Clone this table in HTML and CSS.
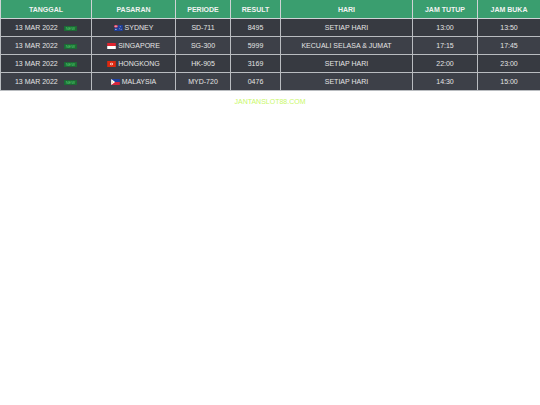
FILE: index.html
```html
<!DOCTYPE html>
<html>
<head>
<meta charset="utf-8">
<link rel="stylesheet" href="styles.css">
</head>
<body>
<table class="tbl">
  <colgroup>
    <col class="c1"><col class="c2"><col class="c3"><col class="c4"><col class="c5"><col class="c6"><col class="c7">
  </colgroup>
  <thead>
    <tr><th>TANGGAL</th><th>PASARAN</th><th>PERIODE</th><th>RESULT</th><th>HARI</th><th>JAM TUTUP</th><th>JAM BUKA</th></tr>
  </thead>
  <tbody>
    <tr>
      <td>13 MAR 2022 <span class="new">NEW</span></td>
      <td><svg class="flag" viewBox="0 0 10 7"><rect width="10" height="7" fill="#1f3f9a"/><rect width="4" height="3" fill="#c8102e"/><path d="M0 1.5h4M2 0v3" stroke="#fff" stroke-width="0.6"/><circle cx="7" cy="2" r="0.5" fill="#fff"/><circle cx="6" cy="4.5" r="0.5" fill="#fff"/><circle cx="8" cy="5" r="0.5" fill="#fff"/><circle cx="2" cy="5" r="0.7" fill="#fff"/></svg>SYDNEY</td>
      <td>SD-711</td><td>8495</td><td>SETIAP HARI</td><td>13:00</td><td>13:50</td>
    </tr>
    <tr>
      <td>13 MAR 2022 <span class="new">NEW</span></td>
      <td><svg class="flag" viewBox="0 0 10 7"><rect width="10" height="3.5" fill="#e0242f"/><rect y="3.5" width="10" height="3.5" fill="#fff"/></svg>SINGAPORE</td>
      <td>SG-300</td><td>5999</td><td>KECUALI SELASA &amp; JUMAT</td><td>17:15</td><td>17:45</td>
    </tr>
    <tr>
      <td>13 MAR 2022 <span class="new">NEW</span></td>
      <td><svg class="flag" viewBox="0 0 10 7"><rect width="10" height="7" fill="#de2910"/><circle cx="5" cy="3.5" r="1.6" fill="#fff"/><circle cx="5" cy="3.5" r="0.8" fill="#de2910"/></svg>HONGKONG</td>
      <td>HK-905</td><td>3169</td><td>SETIAP HARI</td><td>22:00</td><td>23:00</td>
    </tr>
    <tr>
      <td>13 MAR 2022 <span class="new">NEW</span></td>
      <td><svg class="flag" viewBox="0 0 10 7"><rect width="10" height="3.5" fill="#1e3fa0"/><rect y="3.5" width="10" height="3.5" fill="#d7263d"/><path d="M0 0L4.5 3.5L0 7Z" fill="#fff"/><circle cx="1.5" cy="3.5" r="0.6" fill="#f7c21b"/></svg>MALAYSIA</td>
      <td>MYD-720</td><td>0476</td><td>SETIAP HARI</td><td>14:30</td><td>15:00</td>
    </tr>
  </tbody>
</table>
<div class="footer">JANTANSLOT88.COM</div>
</body>
</html>
```

FILE: styles.css
```css
html, body {
  margin: 0;
  padding: 0;
  background: #ffffff;
  font-family: "Liberation Sans", Arial, sans-serif;
}
.tbl {
  width: 540px;
  border-collapse: collapse;
  table-layout: fixed;
  font-size: 7px;
}
.c1 { width: 91px; }
.c2 { width: 84px; }
.c3 { width: 55px; }
.c4 { width: 50px; }
.c5 { width: 132px; }
.c6 { width: 65px; }
.c7 { width: 63px; }
.tbl th {
  background: #3a9e6f;
  color: #f2f2f2;
  font-weight: bold;
  height: 18px;
  padding: 0;
  border: 1px solid #cfd3d6;
  border-top: none;
  text-align: center;
  vertical-align: middle;
}
.tbl td {
  background: #373a41;
  color: #e4e4e4;
  height: 17px;
  padding: 0;
  border: 1px solid #b9bcc0;
  text-align: center;
  vertical-align: middle;
  white-space: nowrap;
}
.tbl tbody tr:nth-child(even) td {
  background: #3d4048;
}
.new {
  display: inline-block;
  background: #1d6a35;
  color: #4fd36e;
  font-size: 4px;
  line-height: 5px;
  padding: 0 2px;
  margin-left: 4px;
  vertical-align: middle;
}
.flag {
  width: 9px;
  height: 6px;
  margin-right: 2px;
  vertical-align: -0.5px;
}
.footer {
  text-align: center;
  color: #c9f86a;
  font-size: 7px;
  margin-top: 7px;
}
```
